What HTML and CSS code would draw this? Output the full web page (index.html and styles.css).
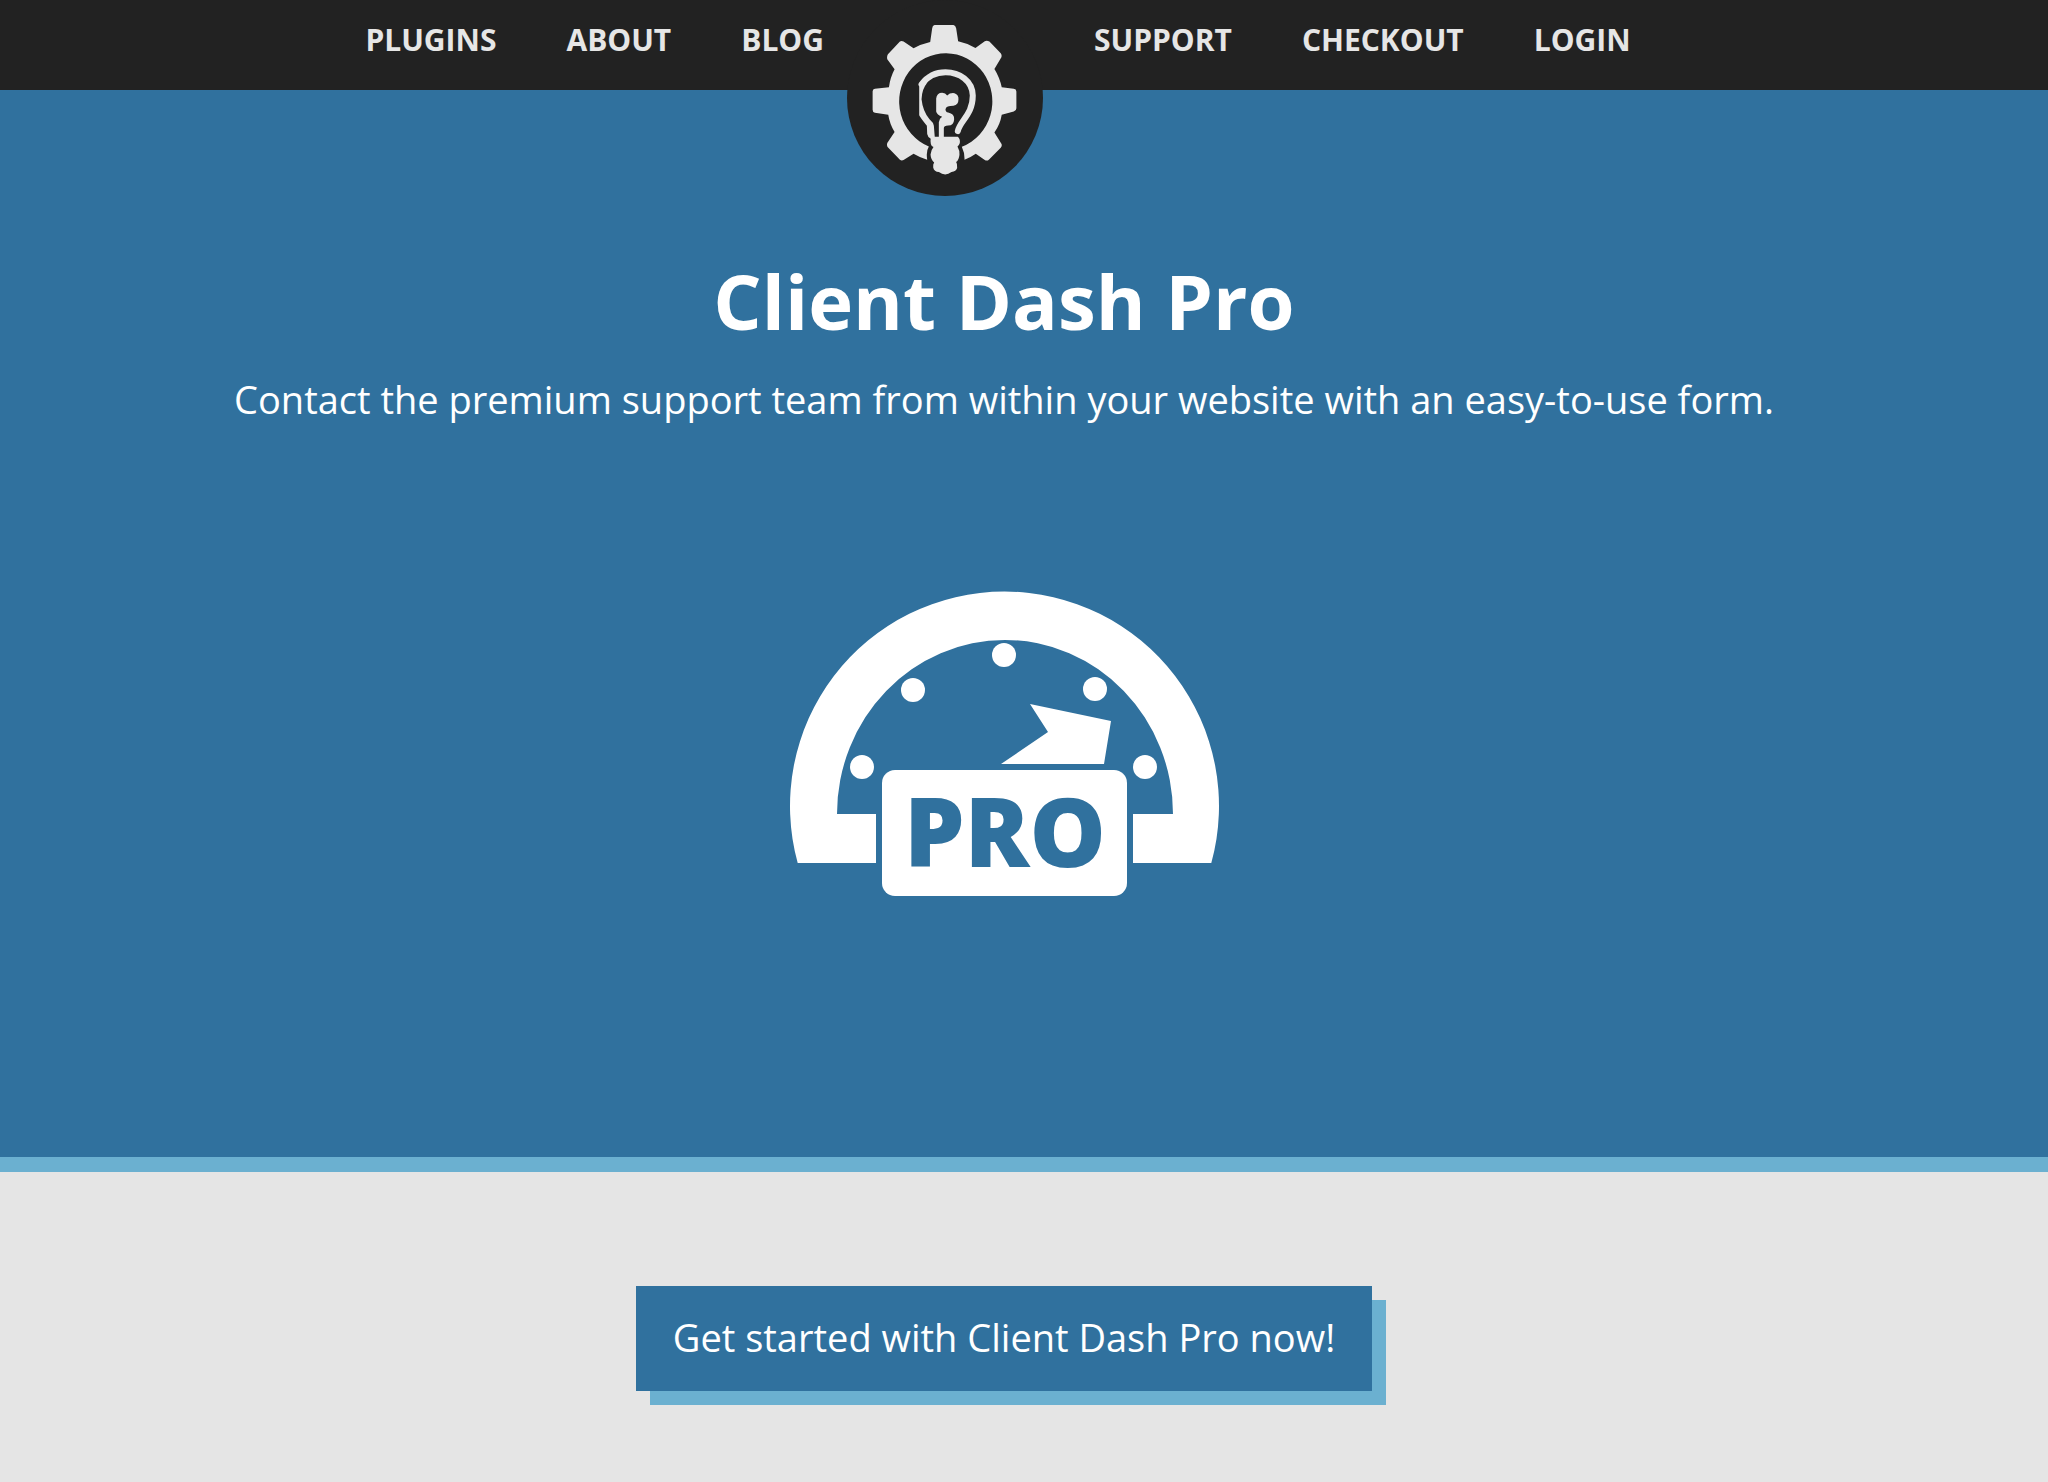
FILE: index.html
```html
<!DOCTYPE html>
<html lang="en">
<head>
<meta charset="utf-8">
<meta name="viewport" content="width=device-width, initial-scale=1">
<title>Client Dash Pro</title>
<link rel="stylesheet" href="styles.css">
</head>
<body>
<header class="site-header">
  <nav class="site-nav" aria-label="Main">
    <a class="nav-link" href="#plugins">PLUGINS</a>
    <a class="nav-link" href="#about">ABOUT</a>
    <a class="nav-link" href="#blog">BLOG</a>
    <a class="logo" href="#home" aria-label="Home">
      <svg class="logo-mark" viewBox="22 0 589 589" aria-hidden="true">
        <path d="M285 75H342Q348 76 350 85L356 124Q384 130 408 144L436 124Q442 120 450 125L484 160Q488 165 486 172L465 207Q481 233 487 262L523 267Q531 268 531 275V325Q531 333 523 335L487 345Q482 375 465 398L486 432Q489 438 484 444L449 479Q443 485 436 481L409 462Q392 474 375 480Q376 460 367 441A140 145 0 1 0 268 440Q259 454 263 480Q242 474 222 462L192 481Q186 484 181 480L144 442Q141 437 143 430L165 397Q150 372 146 345L106 339Q99 338 99 330V274Q99 268 106 267L148 262Q152 232 165 208L143 178Q141 170 145 163L181 125Q186 121 192 125L222 145Q245 132 272 126L278 85Q279 76 285 75Z"/>
        <path class="logo-wire" d="M355 394C362 362 400 345 400 287C399 243 360 217 318 217C285 217 262 232 246 253"/>
        <path d="M239 250V346Q241 351 262 378L263 403Q264 412 274 417L286 415L283 378Q282 368 270 358Q250 335 246 298Q247 268 262 250Z"/>
        <path d="M298 413V367Q300 355 308 351Q292 345 290 335V296Q292 279 308 279Q318 279 323 287Q332 278 345 280Q358 285 357 298Q357 315 342 318Q320 318 318 328Q318 337 326 338Q345 342 344 358Q343 377 326 377Q313 377 313 385V413Z"/>
        <path d="M274 411H355Q363 418 361 430Q358 440 354 440Q361 452 360 465Q358 482 350 487Q354 492 353 505Q350 516 336 517Q317 532 298 517Q284 516 281 503Q280 492 284 488Q274 480 273 464Q275 450 282 442Q270 440 274 411Z"/>
      </svg>
    </a>
    <a class="nav-link" href="#support">SUPPORT</a>
    <a class="nav-link" href="#checkout">CHECKOUT</a>
    <a class="nav-link" href="#login">LOGIN</a>
  </nav>
</header>
<main>
  <section class="hero">
    <h1 class="hero-title">Client Dash Pro</h1>
    <p class="hero-text">Contact the premium support team from within your website with an easy-to-use form.</p>
    <svg class="gauge" viewBox="790 591 429 306" role="img" aria-label="Client Dash Pro gauge">
      <path d="M797.7 863A214.5 214.5 0 1 1 1211.3 863H1133V814H1173A168 174 0 0 0 837 814H876V863Z"/>
      <circle cx="862" cy="767" r="12"/>
      <circle cx="913" cy="690" r="12"/>
      <circle cx="1004" cy="655" r="12"/>
      <circle cx="1095" cy="689" r="12"/>
      <circle cx="1145" cy="767" r="12"/>
      <path d="M1001 764L1048 732L1030 704L1111 721L1104 764Z"/>
      <rect x="882" y="770" width="245" height="126" rx="13"/>
      <text class="gauge-label" x="1005" y="867" text-anchor="middle">PRO</text>
    </svg>
  </section>
  <section class="cta">
    <a class="cta-button" href="#get-started">Get started with Client Dash Pro now!</a>
  </section>
</main>
</body>
</html>
```
FILE: styles.css
```css
* {
  box-sizing: border-box;
}

body {
  margin: 0;
  background: #e5e5e5;
  color: #fff;
  font-family: "Open Sans", sans-serif;
}

a {
  color: inherit;
  text-decoration: none;
}

.site-header {
  height: 90px;
  background: #222;
  color: #e6e6e6;
}

.site-nav {
  display: flex;
  justify-content: center;
  align-items: flex-start;
  padding-right: 52px;
}

.nav-link {
  padding: 20px 35px;
  font-size: 30px;
  font-weight: 700;
  line-height: 40px;
}

.logo {
  flex: none;
  width: 196px;
  height: 196px;
  margin: 0 16px 0 -12px;
  border-radius: 50%;
  background: #222;
}

.logo-mark {
  display: block;
  width: 100%;
  height: 100%;
  fill: #e6e6e6;
}

.logo-wire {
  fill: none;
  stroke: #e6e6e6;
  stroke-width: 18;
  stroke-linecap: round;
}

.hero {
  display: flex;
  flex-direction: column;
  align-items: center;
  padding: 159px 40px 260px 0;
  border-bottom: 15px solid #6bb0d0;
  background: #30719e;
  text-align: center;
}

.hero-title {
  margin: 0 0 20px;
  font-size: 76px;
  font-weight: 700;
  line-height: 104px;
}

.hero-text {
  margin: 0 0 166px;
  font-size: 38px;
  line-height: 52px;
}

.gauge {
  display: block;
  width: 429px;
  height: 306px;
  max-width: 100%;
  fill: #fff;
}

.gauge-label {
  fill: #30719e;
  font-size: 96px;
  font-weight: 800;
}

.cta {
  display: flex;
  justify-content: center;
  padding: 114px 40px 91px 0;
}

.cta-button {
  padding: 25px 37px 28px;
  background: #30719e;
  box-shadow: 14px 14px 0 #6bb0d0;
  font-size: 38px;
  line-height: 52px;
}
```
